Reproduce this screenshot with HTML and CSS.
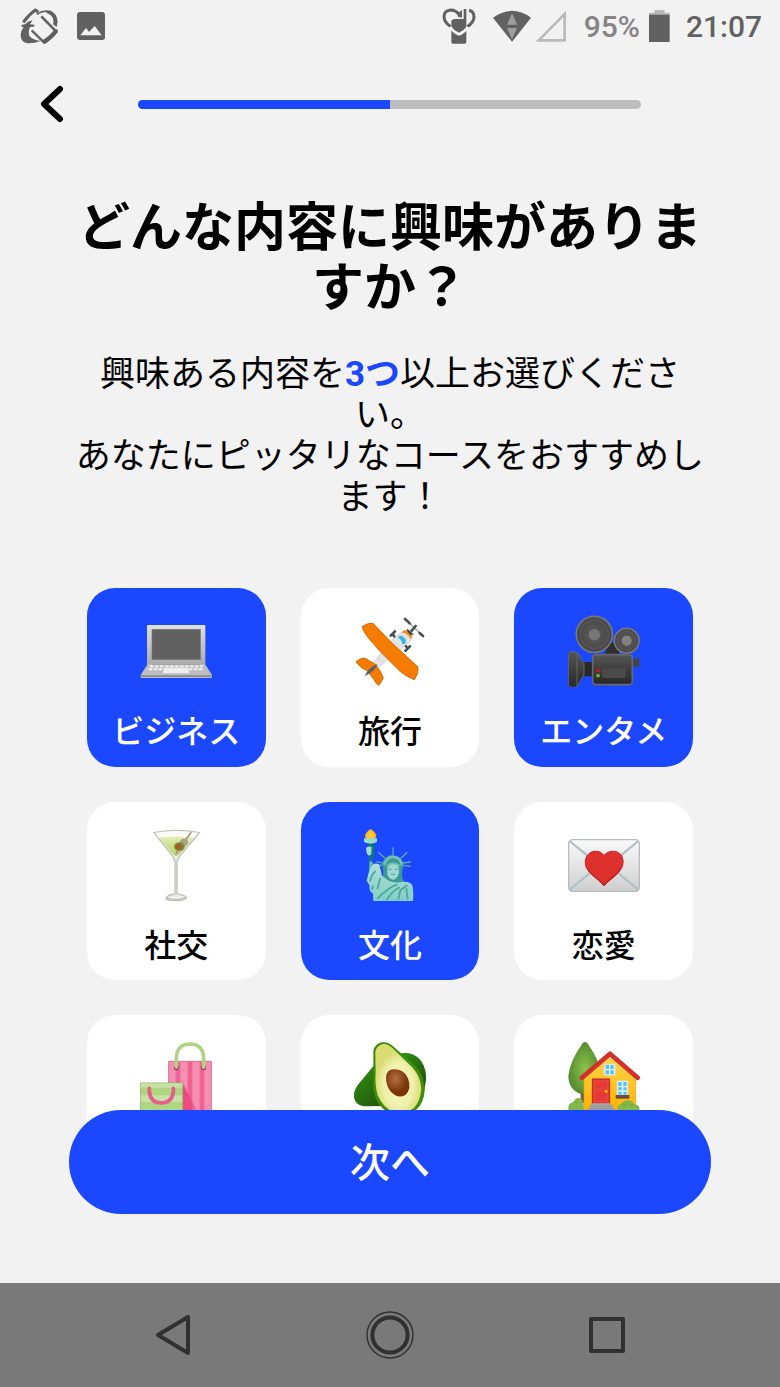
FILE: index.html
```html
<!DOCTYPE html>
<html lang="ja">
<head>
    <meta charset="UTF-8">
    <meta name="viewport" content="width=device-width, initial-scale=1.0">
    <title>興味のある内容</title>
    <link rel="stylesheet" href="styles.css">
</head>
<body>
    <div class="app">
        <div class="status-bar">
            <div class="status-left">
                <svg width="38" height="38" viewBox="58 20 114 114" fill="none" stroke="#616161">
                    <path d="M68 66 Q84 43 104 29 L113 35" stroke-width="9"/>
                    <path d="M108 42 Q128 28 150 34 Q172 46 166 76" stroke-width="5"/>
                    <path d="M146 31 Q178 42 168 80 L157 72 Q164 46 136 37Z" fill="#616161" stroke="none"/>
                    <path d="M122 48 L164 91" stroke-width="8"/>
                    <path d="M170 86 L172 95 Q154 118 131 132 L121 122 Q146 108 160 89Z" fill="#616161" stroke="none"/>
                    <path d="M93 90 L130 126" stroke-width="7"/>
                    <path d="M96 60 L88 72 L102 73 L100 79 L88 80 Q82 96 86 107 Q96 119 120 122 Q100 130 80 129 Q60 125 60 104 Q61 90 69 80 L62 80 L64 73 L73 72 Q82 62 96 60Z" fill="#616161" stroke="none"/>
                </svg>
                <svg width="28" height="28" viewBox="231 36 84 84">
                    <rect x="231" y="36" width="84" height="84" rx="9" fill="#616161"/>
                    <path d="M241 106 L258 84 L267 96 L284 78 L305 106Z" fill="#f2f2f2"/>
                </svg>
            </div>
            <div class="status-right">
                <svg class="status-heart" width="34" height="36" viewBox="36 24 102 108" fill="#616161">
                    <path d="M62 80 Q42 67 42 49 Q43 31 63 30 Q76 30 86 42" fill="none" stroke="#616161" stroke-width="9"/>
                    <path d="M117 31 Q132 34 132 52 Q131 67 112 80" fill="none" stroke="#616161" stroke-width="9"/>
                    <path d="M82 41 L96 30 L96 53 L84 50Z"/>
                    <path d="M64 64 Q66 57 76 57 L101 57 L101 27 L109 27 L109 126 Q109 131 104 131 L69 131 Q64 131 64 126Z"/>
                    <path d="M60 81 Q70 96 87 103 Q104 96 114 81" fill="none" stroke="#f2f2f2" stroke-width="8"/>
                </svg>
                <svg class="status-wifi" width="38" height="32" viewBox="188 28 114 96">
                    <path d="M188 51 Q245 10 302 51 L245 123Z" fill="#616161"/>
                    <path d="M230 72 L245 38 L261 72Z M230 82 L260 82 L245 116Z" fill="#9e9e9e"/>
                </svg>
                <svg class="status-signal" width="31" height="32" viewBox="314 28 93 96">
                    <path d="M325 119 L403 40 L403 119Z" fill="none" stroke="#bababa" stroke-width="8"/>
                </svg>
                <span class="status-percent">95%</span>
                <svg class="status-battery" width="21" height="32" viewBox="657 30 63 96">
                    <path d="M673 30h31v8h15v7h-62v-7h16z" fill="#bababa"/>
                    <path d="M657 44h62v82h-62z" fill="#616161"/>
                </svg>
                <span class="status-time">21:07</span>
            </div>
        </div>

        <header class="header">
            <button class="back" type="button" aria-label="戻る">
                <svg width="24" height="38" viewBox="0 0 24 38" fill="none" stroke="#000" stroke-width="6" stroke-linecap="round" stroke-linejoin="round">
                    <path d="M20 4 L4 19 L20 34"/>
                </svg>
            </button>
            <progress class="progress" value="50" max="100" aria-label="進捗"></progress>
        </header>

        <main class="content">
            <h1 class="title">どんな内容に興味がありますか？</h1>
            <p class="lead">興味ある内容を<strong>3つ</strong>以上お選びください。<br>あなたにピッタリなコースをおすすめします！</p>

            <div class="topics">
                <button class="topic selected" type="button" aria-pressed="true">
                    <svg class="emoji" viewBox="162 80 216 216">
                        <defs>
                            <linearGradient id="laptop" x2="0" y2="1"><stop offset="0" stop-color="#e0e0e0"/><stop offset="1" stop-color="#aaa"/></linearGradient>
                        </defs>
                        <rect x="183" y="110" width="175" height="120" rx="4" fill="url(#laptop)"/>
                        <rect x="198" y="123" width="145" height="91" fill="#616161" stroke="#757575" stroke-width="2"/>
                        <path d="M185 227 H357 L378 260 V266 Q378 269 375 269 H167 Q164 269 164 266 V260Z" fill="#bdbdbd"/>
                        <path d="M165 261 H377 V266 H165Z" fill="#8d8d8d"/>
                        <path d="M192 234 H350 M188 243 H354" stroke="#f3f3f3" stroke-width="6" stroke-dasharray="11 4"/>
                        <path d="M235 238 H306 L311 255 H231Z" fill="#eee"/>
                        <path d="M197 229 H345" stroke="#929292" stroke-width="2"/>
                    </svg>
                    <span class="topic-name">ビジネス</span>
                </button>

                <button class="topic" type="button" aria-pressed="false">
                    <svg class="emoji" viewBox="162 80 216 216">
                        <path d="M315 92 L370 144" stroke="#aaa" stroke-width="5" stroke-linecap="round"/>
                        <path d="M315 92 L329 105 M359 134 L369 143" stroke="#505050" stroke-width="8" stroke-linecap="round"/>
                        <path d="M330 133 L347 113" stroke="#455052" stroke-width="8" stroke-linecap="round"/>
                        <path d="M286 150 L278 136 M272 142 L285 129 M319 175 L311 166 M316 187 L330 174" stroke="#455052" stroke-width="8" stroke-linecap="round"/>
                        <path d="M304 132 Q328 114 336 138 Q338 157 321 166 L235 237 L219 226 L272 158Z" fill="#e2e4e4" stroke="#c5c8c8" stroke-width="2"/>
                        <path d="M304 132 Q331 114 336 144 L333 153 Q322 134 304 132Z" fill="#f58b12"/>
                        <path d="M322 124 L337 137 L330 137Z" fill="#37474f" stroke="#37474f" stroke-width="4"/>
                        <path d="M294 147 Q302 135 318 155 L315 166 L307 168 Q307 158 294 147Z" fill="#35b4e8"/>
                        <path d="M186 115 Q204 103 219 105 L276 164 L354 236 Q357 256 343 274 Q309 261 286 235 L240 189 L203 146 Q190 129 186 115Z" fill="#f57c00" stroke="#d96c05" stroke-width="3"/>
                        <path d="M168 220 Q181 209 194 209 L226 228 Q243 248 250 269 L237 291 Q227 286 222 274 L202 247 Q178 237 168 220Z" fill="#f57c00" stroke="#d96c05" stroke-width="3"/>
                        <path d="M194 264 Q203 238 232 227 Q229 247 194 264Z" fill="#616161"/>
                    </svg>
                    <span class="topic-name">旅行</span>
                </button>

                <button class="topic selected" type="button" aria-pressed="true">
                    <svg class="emoji" viewBox="162 80 216 216">
                        <defs>
                            <linearGradient id="camera" x2="0" y2="1"><stop offset="0" stop-color="#555"/><stop offset="1" stop-color="#272727"/></linearGradient>
                            <radialGradient id="reel"><stop offset="0" stop-color="#5c5c5c"/><stop offset="1" stop-color="#464646"/></radialGradient>
                        </defs>
                        <path d="M272 198 L279 174 L296 162 L315 181 V199Z" fill="#303030"/>
                        <circle cx="241" cy="138" r="54" fill="url(#reel)" stroke="#777" stroke-width="5"/>
                        <circle cx="241" cy="138" r="43" fill="none" stroke="#5b5b5b" stroke-width="3"/>
                        <circle cx="241" cy="139" r="17" fill="#777"/>
                        <circle cx="338" cy="157" r="37" fill="url(#reel)" stroke="#777" stroke-width="5"/>
                        <circle cx="338" cy="157" r="28" fill="none" stroke="#5b5b5b" stroke-width="3"/>
                        <circle cx="338" cy="157" r="15" fill="#828282"/>
                        <path d="M356 216 L376 206 V239 L356 230Z" fill="#454545"/>
                        <path d="M205 221 H237 V264 H204Z" fill="#292929"/>
                        <path d="M163 198 Q164 189 174 190 L185 191 Q196 195 197 204 Q201 218 210 222 V260 Q201 272 190 294 Q186 297 174 297 Q163 296 163 289Z" fill="url(#camera)" stroke="#666" stroke-width="3"/>
                        <path d="M189 194 V294" stroke="#666" stroke-width="3"/>
                        <rect x="236" y="199" width="119" height="90" rx="10" fill="url(#camera)" stroke="#686868" stroke-width="5"/>
                        <rect x="264" y="240" width="71" height="29" rx="7" fill="#4a4a4a"/>
                        <rect x="247" y="242" width="10" height="10" rx="2" fill="#cc1717"/>
                        <rect x="247" y="257" width="10" height="10" rx="2" fill="#69bd27"/>
                    </svg>
                    <span class="topic-name">エンタメ</span>
                </button>

                <button class="topic" type="button" aria-pressed="false">
                    <svg class="emoji" viewBox="162 80 216 216">
                        <defs>
                            <linearGradient id="drink" x2="0" y2="1"><stop offset="0" stop-color="#e4efb4"/><stop offset="1" stop-color="#b4cf68"/></linearGradient>
                        </defs>
                        <path d="M204 91 Q270 78 340 91 L280 163 L273 178 V275 Q300 278 301 287 Q291 296 270 295 Q244 296 240 288 Q242 278 267 275 V178 L261 163Z" fill="#ecece8" stroke="#c1c1ba" stroke-width="4"/>
                        <path d="M207 91 Q270 81 337 91 L323 106 Q270 101 218 106Z" fill="#fafafa"/>
                        <path d="M218 106 Q271 101 323 106 L280 156 Q270 167 261 155Z" fill="url(#drink)"/>
                        <path d="M270 154 L316 89" stroke="#ad8472" stroke-width="4"/>
                        <ellipse cx="294" cy="120" rx="12" ry="11" fill="#a0a184"/>
                        <ellipse cx="294" cy="119" rx="8" ry="6" fill="#b59e89"/>
                        <ellipse cx="280" cy="133" rx="16" ry="13" fill="#788b30"/>
                        <circle cx="278" cy="133" r="8" fill="#b35431"/>
                        <path d="M242 287 Q270 297 300 286" fill="none" stroke="#b5b6ad" stroke-width="3"/>
                    </svg>
                    <span class="topic-name">社交</span>
                </button>

                <button class="topic selected" type="button" aria-pressed="true">
                    <svg class="emoji" viewBox="162 80 216 216">
                        <defs>
                            <linearGradient id="robe" x2="0" y2="1"><stop offset="0" stop-color="#b0dfd9"/><stop offset="1" stop-color="#83cdc2"/></linearGradient>
                        </defs>
                        <path d="M235 150 L257 169 M279 135 V158 M322 150 L301 169 M229 178 L250 182 M229 191 L250 188 M333 179 L307 182 M333 192 L307 189" stroke="#60aaa9" stroke-width="4"/>
                        <path d="M196 109 Q193 95 202 88 Q208 80 213 81 Q227 90 229 100 L225 111Z" fill="#f9b51c"/>
                        <path d="M200 108 Q201 89 213 86 Q224 99 220 110Z" fill="#ffca3a"/>
                        <path d="M203 118 H223 L224 145 L218 170 L219 193 L206 208 L208 164Z" fill="#08787d"/>
                        <path d="M192 108 H231 V117 Q230 123 212 124 Q193 123 192 117Z" fill="#9ad9cf"/>
                        <path d="M198 141 Q199 129 215 134 L214 154 Q208 165 201 154Z" fill="#a5d8d2"/>
                        <path d="M208 178 Q214 173 219 182 L218 194 L207 208Z" fill="#63b5ae"/>
                        <path d="M250 210 L247 187 Q250 160 279 158 Q307 162 310 188 L306 218 Q307 237 317 242 L246 240Z" fill="#3b9997"/>
                        <path d="M213 194 Q222 179 237 186 Q243 204 246 220 L266 235 Q288 244 309 238 Q335 237 338 252 L340 276 L339 297 H220 L219 274 Q206 268 209 249 L200 236 Q204 211 213 194Z" fill="url(#robe)"/>
                        <path d="M262 199 Q264 185 279 182 Q294 184 297 200 Q300 222 282 232 Q259 232 262 199Z" fill="#9ed8d0"/>
                        <path d="M252 187 Q263 161 281 164 Q302 166 306 188" fill="none" stroke="#77bfb8" stroke-width="8"/>
                        <path d="M259 192 Q277 173 301 191" fill="none" stroke="#70b8b0" stroke-width="5"/>
                        <path d="M265 201 H275 M285 201 H295 M273 216 H286" stroke="#559f9a" stroke-width="3"/>
                        <path d="M227 206 Q214 216 210 238 M241 226 L232 260 M219 249 L216 263 M291 247 Q268 253 232 289 M299 255 Q272 270 259 295 M322 248 L301 264 L295 292 M319 257 L323 291" stroke="#43aaa0" stroke-width="5" fill="none"/>
                    </svg>
                    <span class="topic-name">文化</span>
                </button>

                <button class="topic" type="button" aria-pressed="false">
                    <svg class="emoji" viewBox="162 80 216 216">
                        <defs>
                            <linearGradient id="letter" x2="0" y2="1"><stop offset="0" stop-color="#fafafa"/><stop offset="1" stop-color="#cecece"/></linearGradient>
                        </defs>
                        <rect x="164" y="112" width="212" height="155" rx="12" fill="url(#letter)" stroke="#b9bcbc" stroke-width="4"/>
                        <path d="M168 117 L251 185 Q270 200 289 185 L372 117 M168 262 L244 198 M372 262 L296 198" stroke="#b2c2ca" stroke-width="7" fill="none"/>
                        <path d="M270 251 Q261 238 240 223 Q202 193 218 162 Q233 139 260 150 L270 159 L281 150 Q310 139 324 162 Q338 193 300 224 Q278 239 270 251Z" fill="#de302d" stroke="#c62828" stroke-width="3"/>
                        <path d="M222 193 Q232 213 252 226 L270 243 L290 225 Q311 211 318 193 Q321 207 301 223 L270 250 L241 223 Q224 210 222 193Z" fill="#c62828"/>
                    </svg>
                    <span class="topic-name">恋愛</span>
                </button>

                <button class="topic" type="button" aria-pressed="false" aria-label="ショッピング">
                    <svg class="emoji" viewBox="242 98 216 216">
                        <defs>
                            <linearGradient id="shade"><stop offset="0" stop-color="#ec407a"/><stop offset="1" stop-color="#ec407a" stop-opacity=".3"/></linearGradient>
                        </defs>
                        <path d="M328 156 H456 V314 H328Z" fill="#f48fb1" stroke="#d47396" stroke-width="3"/>
                        <path d="M349 157h14v157h-14z M385 157h14v157h-14z M421 157h14v157h-14z" fill="#f06292"/>
                        <path d="M370 222 L418 314 H370Z" fill="url(#shade)"/>
                        <circle cx="351" cy="175" r="7" fill="#880e4f"/>
                        <circle cx="433" cy="175" r="7" fill="#880e4f"/>
                        <path d="M351 174 V145 Q353 105 392 104 Q431 105 433 145 V174" fill="none" stroke="#aed581" stroke-width="11" stroke-linecap="round"/>
                        <path d="M243 221 H370 V314 H243Z" fill="#aed581" stroke="#91b66d" stroke-width="3"/>
                        <path d="M244 222h125v13H244z M244 258h125v20H244z" fill="#c5e1a5"/>
                        <path d="M270 237 V248 Q274 280 306 281 Q338 280 342 248 V237" fill="none" stroke="#e85b8b" stroke-width="11" stroke-linecap="round"/>
                    </svg>
                </button>

                <button class="topic" type="button" aria-pressed="false" aria-label="食べ物">
                    <svg class="emoji" viewBox="882 98 216 216">
                        <defs>
                            <linearGradient id="peel" x2="1" y2="1"><stop offset="0" stop-color="#2e9413"/><stop offset="1" stop-color="#234c0b"/></linearGradient>
                            <radialGradient id="flesh" cy=".6"><stop offset="0" stop-color="#fafbc2"/><stop offset=".65" stop-color="#eef0ab"/><stop offset="1" stop-color="#d9dc70"/></radialGradient>
                            <radialGradient id="seed" cx=".4" cy=".35"><stop offset="0" stop-color="#b36e43"/><stop offset="1" stop-color="#793407"/></radialGradient>
                        </defs>
                        <path d="M941 169 L895 225 Q874 252 886 276 Q895 292 922 291 L968 290 L986 220Z" fill="url(#peel)"/>
                        <path d="M1022 132 Q1055 126 1078 148 Q1100 172 1098 211 L1092 248 L1045 210Z" fill="url(#peel)"/>
                        <path d="M940 125 Q944 104 965 99 Q984 96 1001 112 L1063 167 Q1093 196 1094 243 Q1092 281 1070 300 Q1040 322 1000 315 Q965 307 947 267 Q936 237 940 200Z" fill="#3f8d0d"/>
                        <path d="M946 127 Q951 107 970 104 Q983 103 998 117 L1056 173 Q1083 202 1084 240 Q1081 276 1062 296 Q1036 314 1002 308 Q970 297 953 258 Q944 228 947 190Z" fill="url(#flesh)"/>
                        <path d="M978 204 Q980 179 1003 180 Q1032 180 1044 207 Q1056 239 1036 257 Q1015 269 994 249 Q977 230 978 204Z" fill="url(#seed)"/>
                    </svg>
                </button>

                <button class="topic" type="button" aria-pressed="false" aria-label="暮らし">
                    <svg class="emoji" viewBox="534 98 216 216">
                        <defs>
                            <radialGradient id="tree"><stop offset="0" stop-color="#8bc34a"/><stop offset="1" stop-color="#558b2f"/></radialGradient>
                            <linearGradient id="wall" x2="0" y2="1"><stop offset="0" stop-color="#ffd54f"/><stop offset="1" stop-color="#ffb300"/></linearGradient>
                        </defs>
                        <path d="M572 246h11v35h-11z" fill="#795548"/>
                        <path d="M578 102 Q585 94 592 102 Q629 153 633 193 Q638 247 586 257 Q535 248 535 199 Q539 156 578 102Z" fill="url(#tree)"/>
                        <path d="M582 204 L660 139 L737 204 V304 H582Z" fill="url(#wall)" stroke="#e29d19" stroke-width="2"/>
                        <path d="M576 205 L660 133 L743 205" fill="none" stroke="#d32f2f" stroke-width="14" stroke-linecap="round" stroke-linejoin="round"/>
                        <rect x="642" y="164" width="34" height="34" rx="3" fill="#e1f5fe" stroke="#ead69b" stroke-width="3"/>
                        <path d="M647 167h10v12h-10z M661 167h10v12h-10z M647 183h10v12h-10z M661 183h10v12h-10z" fill="#4fc3f7"/>
                        <rect x="607" y="209" width="52" height="77" fill="#e53935" stroke="#b92724" stroke-width="3"/>
                        <path d="M614 215h39v25h-39z M614 247h39v29h-39z" fill="none" stroke="#ef5350" stroke-width="2"/>
                        <circle cx="649" cy="246" r="5" fill="#ffb300"/>
                        <rect x="681" y="214" width="33" height="44" rx="3" fill="#e1f5fe" stroke="#ead69b" stroke-width="3"/>
                        <path d="M685 218h10v12h-10z M700 218h10v12h-10z M685 234h10v9h-10z M700 234h10v9h-10z M685 247h10v9h-10z M700 247h10v9h-10z" fill="#4fc3f7"/>
                        <path d="M677 257h41v11h-41z" fill="#6d4c41"/>
                        <path d="M603 282h61v7h5v8h5v12h-80v-12h5v-8h4z" fill="#a7a7a7"/>
                        <path d="M599 290h70M594 298h80" stroke="#858585" stroke-width="2"/>
                        <path d="M535 303 Q532 281 550 279 Q557 263 570 267 Q582 271 582 304Z M682 304 Q679 286 695 284 Q703 270 717 273 Q730 274 732 286 Q751 284 748 305Z" fill="#83b84d"/>
                        <path d="M550 279 Q557 276 560 284 M695 284 Q704 281 707 290 M732 286 Q724 285 723 292" stroke="#689f38" stroke-width="3" fill="none"/>
                    </svg>
                </button>
            </div>
        </main>

        <div class="actions">
            <button class="next" type="button">次へ</button>
        </div>

        <nav class="nav-bar">
            <button type="button" aria-label="戻る">
                <svg width="36" height="42" viewBox="0 0 36 42" fill="none" stroke="#303030" stroke-width="4" stroke-linejoin="round">
                    <path d="M33 3 V39 L3 21Z"/>
                </svg>
            </button>
            <button type="button" aria-label="ホーム">
                <svg width="48" height="48" viewBox="0 0 48 48" fill="none" stroke="#303030">
                    <circle cx="24" cy="24" r="23" stroke-width="1.4"/>
                    <circle cx="24" cy="24" r="17.6" stroke-width="4"/>
                </svg>
            </button>
            <button type="button" aria-label="アプリ履歴">
                <svg width="36" height="36" viewBox="0 0 36 36" fill="none" stroke="#303030" stroke-width="4" stroke-linejoin="round">
                    <rect x="2" y="2" width="32" height="32"/>
                </svg>
            </button>
        </nav>
    </div>

    <script>
        document.querySelectorAll('.topic').forEach((topic) => {
            topic.addEventListener('click', () => {
                const selected = topic.classList.toggle('selected');
                topic.setAttribute('aria-pressed', selected);
            });
        });
    </script>
</body>
</html>
```
FILE: styles.css
```css
* {
    box-sizing: border-box;
}
body {
    margin: 0;
    font-family: Roboto, "Noto Sans CJK JP", sans-serif;
    background-color: #f2f2f2;
    color: #000;
}
button {
    padding: 0;
    border: none;
    background: none;
    color: inherit;
    font-family: inherit;
    cursor: pointer;
}
svg {
    display: block;
    flex-shrink: 0;
}
.app {
    position: relative;
    display: flex;
    flex-direction: column;
    height: 100vh;
    overflow: hidden;
}

/* status bar */
.status-bar {
    display: flex;
    justify-content: space-between;
    flex-shrink: 0;
    height: 52px;
    padding: 0 18px 0 20px;
    color: #616161;
    font-size: 30px;
    font-weight: 500;
}
.status-left,
.status-right {
    display: flex;
    align-items: center;
}
.status-left {
    gap: 19px;
}
.status-heart {
    margin-right: 17px;
}
.status-wifi {
    margin-right: 4px;
}
.status-signal {
    margin-right: 18px;
}
.status-percent {
    margin-right: 9px;
    color: #858585;
}
.status-battery {
    margin-right: 16px;
}

/* header */
.header {
    display: grid;
    grid-template-columns: 98px 1fr;
    align-items: center;
    flex-shrink: 0;
    height: 104px;
    padding: 0 139px 0 40px;
}
.back {
    justify-self: start;
}
.progress {
    display: block;
    width: 100%;
    height: 9px;
    border: none;
    border-radius: 5px;
    overflow: hidden;
    appearance: none;
    -webkit-appearance: none;
}
.progress::-webkit-progress-bar {
    background-color: #bdbdbd;
}
.progress::-webkit-progress-value {
    background-color: #1b48ff;
}

/* content */
.content {
    flex: 1;
    min-height: 0;
    padding: 43px 69px 0;
    overflow-y: auto;
    scrollbar-width: none;
}
.title {
    margin: 0 0 35px;
    font-size: 52px;
    line-height: 60px;
    font-weight: 700;
    text-align: center;
}
.lead {
    margin: 0 0 70px;
    font-size: 35px;
    line-height: 41px;
    text-align: center;
}
.lead strong {
    color: #1b48ff;
}
.topics {
    display: grid;
    grid-template-columns: repeat(3, 1fr);
    gap: 35px;
    padding: 0 18px 192px;
}
.topic {
    display: flex;
    flex-direction: column;
    align-items: center;
    gap: 21px;
    aspect-ratio: 1;
    padding-top: 27px;
    border-radius: 28px;
    background-color: #fff;
}
.topic.selected {
    background-color: #1b48ff;
    color: #fff;
}
.emoji {
    width: 72px;
    height: 72px;
}
.topic-name {
    font-size: 32px;
    line-height: 48px;
    font-weight: 500;
}

/* floating button over the list */
.actions {
    position: absolute;
    left: 0;
    right: 0;
    bottom: 173px;
    padding: 0 69px;
}
.next {
    display: block;
    width: 100%;
    height: 104px;
    padding-bottom: 4px;
    border-radius: 52px;
    background-color: #1b48ff;
    color: #fff;
    font-size: 40px;
    font-weight: 500;
}

/* system navigation */
.nav-bar {
    display: grid;
    grid-template-columns: repeat(3, 1fr);
    place-items: center;
    flex-shrink: 0;
    height: 104px;
    padding: 0 65px;
    background-color: #797979;
}
```
